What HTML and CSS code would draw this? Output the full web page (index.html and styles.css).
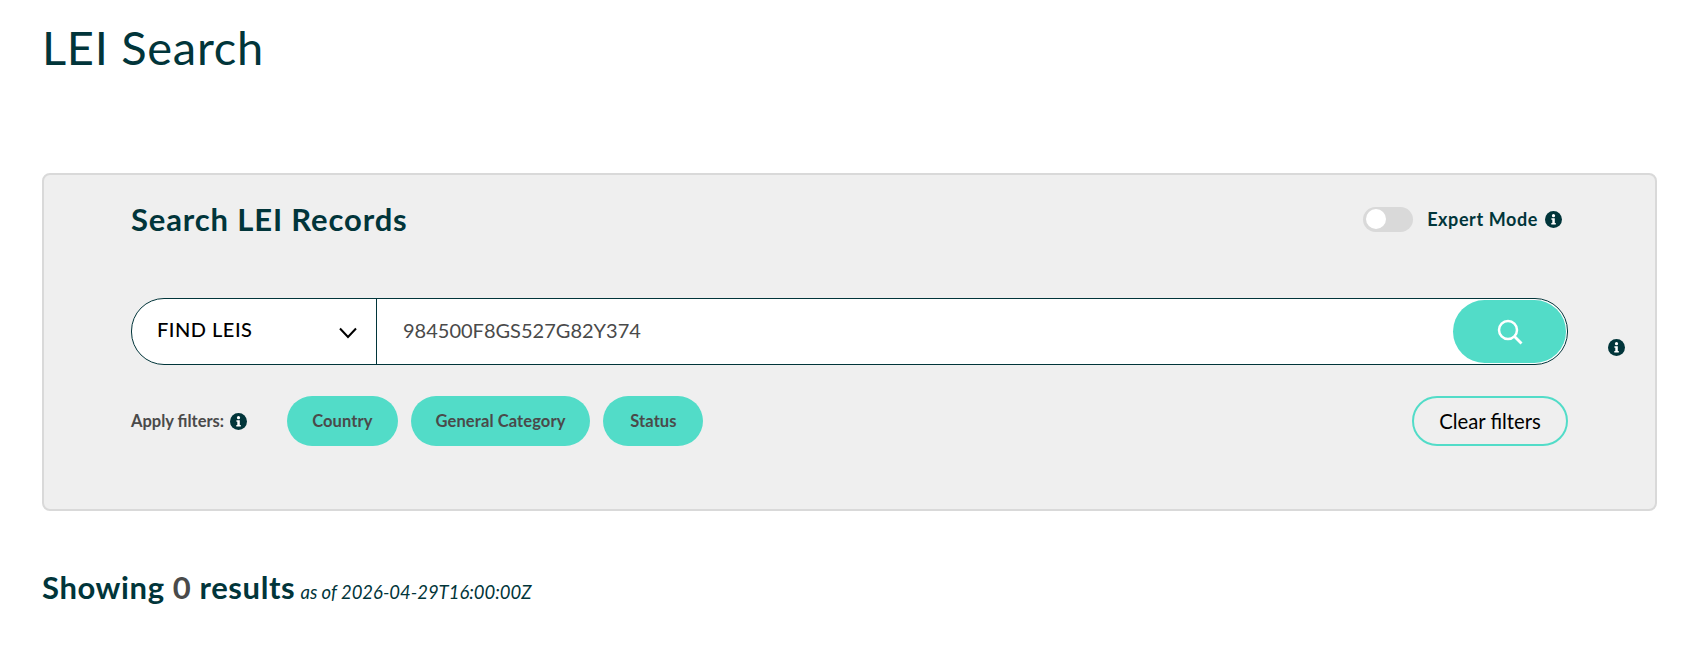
FILE: index.html
```html
<!DOCTYPE html>
<html>
    <head>
        <link rel="stylesheet" href="styles.css">
        <title>LEI Search</title>
    </head>
    <body>
        <svg class="defs" width="0" height="0">
            <symbol id="info" viewBox="0 0 17 17">
                <circle cx="8.5" cy="8.5" r="8.5" fill="#01353a"/>
                <circle cx="8.5" cy="4.7" r="1.6" fill="#fff"/>
                <path d="M6.4 7.2h3.4v4.7h1v1.5H6.3v-1.5h1v-3.2h-.9z" fill="#fff"/>
            </symbol>
        </svg>
        <main class="page">
            <h1 class="title">LEI Search</h1>

            <section class="panel">
                <div class="panel-head">
                    <h2 class="panel-title">Search LEI Records</h2>
                    <div class="expert">
                        <span class="toggle"><span class="knob"></span></span>
                        <span class="expert-label">Expert Mode</span>
                        <svg class="info"><use href="#info"/></svg>
                    </div>
                </div>

                <div class="search-row">
                    <form class="search-bar">
                        <div class="select">
                            <span class="select-label">FIND LEIS</span>
                            <svg class="chevron" viewBox="0 0 20 14"><path d="M2 2.5l8 8.5 8-8.5" fill="none" stroke="#000" stroke-width="2"/></svg>
                        </div>
                        <input class="search-input" type="text" value="984500F8GS527G82Y374">
                        <button class="search-btn" type="button">
                            <svg viewBox="0 0 26 26" width="26" height="26"><circle cx="11" cy="11" r="9" fill="none" stroke="#fff" stroke-width="2.5"/><path d="M17.5 17.5l7 7" stroke="#fff" stroke-width="2.8"/></svg>
                        </button>
                    </form>
                    <svg class="info search-info"><use href="#info"/></svg>
                </div>

                <div class="filters">
                    <span class="filters-label">Apply filters:</span>
                    <svg class="info"><use href="#info"/></svg>
                    <div class="pills">
                        <button class="pill" type="button">Country</button>
                        <button class="pill" type="button">General Category</button>
                        <button class="pill pill-status" type="button">Status</button>
                    </div>
                    <button class="clear-btn" type="button">Clear filters</button>
                </div>
            </section>

            <p class="results">Showing <span class="count">0</span> results <em class="as-of">as of 2026-04-29T16:00:00Z</em></p>
        </main>
    </body>
</html>
```

FILE: styles.css
```css
body {
    margin: 0;
    background-color: #fff;
    color: #01353a;
    font-family: "Lato", sans-serif;
}
.defs {
    position: absolute;
}
.page {
    padding: 0 30px 0 42px;
}
.title {
    margin: 0;
    padding-top: 21px;
    height: 173px;
    box-sizing: border-box;
    font-size: 47px;
    line-height: 52px;
    font-weight: 400;
    letter-spacing: 0.7px;
}
.panel {
    box-sizing: border-box;
    height: 338px;
    border: 2px solid #d9d9d9;
    border-radius: 8px;
    background-color: #efefef;
    padding: 0 87px;
}
.panel-head {
    display: flex;
    align-items: center;
    justify-content: space-between;
    box-sizing: border-box;
    height: 94px;
    padding-bottom: 6px;
}
.panel-title {
    margin: 0;
    font-size: 31px;
    font-weight: 700;
    letter-spacing: 0.85px;
}
.expert {
    display: flex;
    align-items: center;
    margin-right: 6px;
}
.toggle {
    display: flex;
    align-items: center;
    box-sizing: border-box;
    width: 50px;
    height: 25px;
    padding-left: 3px;
    border-radius: 13px;
    background-color: #d9d9d9;
}
.knob {
    width: 20px;
    height: 20px;
    border-radius: 50%;
    background-color: #fff;
}
.expert-label {
    margin: 0 7px 0 14px;
    font-size: 18px;
    font-weight: 700;
    letter-spacing: 0.6px;
}
.info {
    flex: none;
    width: 17px;
    height: 17px;
}
.search-info {
    margin-top: 32px;
}
.search-row {
    display: flex;
    align-items: center;
    gap: 40px;
    margin: 29px -57px 0 0;
}
.search-bar {
    flex: 1;
    display: flex;
    height: 67px;
    box-sizing: border-box;
    border: 1px solid #01353a;
    border-radius: 33px;
    background-color: #fff;
    overflow: hidden;
}
.select {
    display: flex;
    align-items: center;
    justify-content: space-between;
    box-sizing: border-box;
    width: 245px;
    padding: 0 18px 0 25px;
    border-right: 1px solid #01353a;
    color: #000;
    font-size: 20px;
    font-weight: 500;
}
.select-label {
    margin-bottom: 5px;
    letter-spacing: 0.5px;
}
.chevron {
    width: 20px;
    height: 14px;
    margin-top: 2px;
}
.search-input {
    flex: 1;
    min-width: 0;
    border: 0;
    outline: 0;
    padding: 0 0 3px 26px;
    background: transparent;
    color: #4a4a4a;
    font-family: "Lato", sans-serif;
    font-size: 20px;
}
.search-btn {
    flex: none;
    display: flex;
    align-items: center;
    justify-content: center;
    width: 113px;
    margin: 1px;
    border: 0;
    border-radius: 32px;
    background-color: #52dcc8;
}
.filters {
    display: flex;
    align-items: center;
    margin-top: 31px;
    height: 50px;
}
.filters-label {
    margin-right: 6px;
    color: #4a4a4a;
    font-size: 16.5px;
    font-weight: 700;
}
.pills {
    display: flex;
    gap: 13px;
    margin-left: 40px;
}
.pill {
    height: 50px;
    padding: 0 25px;
    border: 0;
    border-radius: 25px;
    background-color: #52dcc8;
    color: #4a4a4a;
    font-family: "Lato", sans-serif;
    font-size: 16.5px;
    font-weight: 700;
    letter-spacing: 0.1px;
}
.pill-status {
    min-width: 100px;
}
.clear-btn {
    margin-left: auto;
    width: 156px;
    height: 50px;
    border: 2.5px solid #52dcc8;
    border-radius: 25px;
    background: transparent;
    color: #000;
    font-family: "Lato", sans-serif;
    font-size: 20.3px;
}
.results {
    margin: 56px 0 0;
    font-size: 31px;
    font-weight: 700;
    line-height: 40px;
    letter-spacing: 0.6px;
}
.count {
    color: #4a4a4a;
}
.as-of {
    margin-left: -3px;
    font-size: 18.45px;
    font-weight: 400;
    letter-spacing: 0;
}
```
